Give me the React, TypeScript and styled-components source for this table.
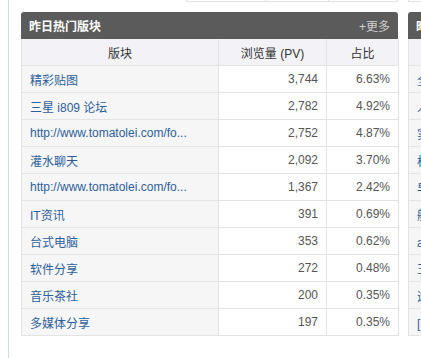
import React from "react";
import styled, { createGlobalStyle } from "styled-components";

const GlobalStyle = createGlobalStyle`
  html, body { margin: 0; padding: 0; background: #fff; overflow: hidden; }
  body { font-family: "Liberation Sans", "Noto Sans CJK SC", sans-serif; font-size: 12px; }
`;

const Page = styled.div`
  width: 421px;
  height: 358px;
  padding-left: 8px;
  box-sizing: border-box;
  overflow: hidden;
`;

const Rail = styled.div`
  height: 100%;
  border-left: 1px solid #cfe0e3;
  padding-left: 12px;
  display: flex;
  gap: 10px;
`;

const Column = styled.div<{ $w: number }>`
  flex: 0 0 ${(p) => p.$w}px;
  width: ${(p) => p.$w}px;
  display: flex;
  flex-direction: column;
`;

const PrevRow = styled.div<{ $offset: number }>`
  display: flex;
  padding-left: ${(p) => p.$offset}px;
  height: 2px;
`;

const PrevCell = styled.div<{ $w: number }>`
  width: ${(p) => p.$w}px;
  height: 1px;
  border-left: 1px solid #e3e3e3;
  border-bottom: 1px solid #e3e3e3;
  box-sizing: content-box;
  &:last-child { border-right: 1px solid #e3e3e3; }
`;

const Panel = styled.section`
  margin-top: 10px;
`;

const PanelHead = styled.div`
  height: 27px;
  background: #5b5b5b;
  border-radius: 3px 3px 0 0;
  display: flex;
  align-items: center;
  justify-content: space-between;
  padding: 0 8px 0 8px;
  box-sizing: border-box;
`;

const Title = styled.h3`
  margin: 0;
  color: #fff;
  font-size: 12px;
  font-weight: bold;
  white-space: nowrap;
`;

const More = styled.a`
  color: #cfcfcf;
  font-size: 12px;
  text-decoration: none;
  white-space: nowrap;
`;

const Table = styled.table`
  border-collapse: collapse;
  table-layout: fixed;
  width: 100%;
`;

const Th = styled.th`
  height: 26px;
  padding: 0;
  background: #f2f2f7;
  border: 1px solid #e3e3e3;
  border-top: none;
  color: #333;
  font-weight: normal;
  font-size: 12px;
  text-align: center;
  white-space: nowrap;
  overflow: hidden;
`;

const Td = styled.td<{ $first?: boolean }>`
  height: 26px;
  padding: 0 8px;
  border: 1px solid #e3e3e3;
  background: ${(p) => (p.$first ? "#f6f6f6" : "#fff")};
  color: #555;
  font-size: 12px;
  text-align: ${(p) => (p.$first ? "left" : "right")};
  white-space: nowrap;
  overflow: hidden;
`;

const Link = styled.a`
  color: #2c5f9b;
  text-decoration: none;
`;

const rows = [
  ["精彩贴图", "3,744", "6.63%"],
  ["三星 i809 论坛", "2,782", "4.92%"],
  ["http://www.tomatolei.com/fo...", "2,752", "4.87%"],
  ["灌水聊天", "2,092", "3.70%"],
  ["http://www.tomatolei.com/fo...", "1,367", "2.42%"],
  ["IT资讯", "391", "0.69%"],
  ["台式电脑", "353", "0.62%"],
  ["软件分享", "272", "0.48%"],
  ["音乐茶社", "200", "0.35%"],
  ["多媒体分享", "197", "0.35%"],
];

const rightRows = [
  "全新手机评测", "人气帖子推荐", "实用技巧分享", "标准配置清单", "早期版本下载",
  "航拍作品欣赏", "a站视频合集", "王者荣耀攻略", "造型设计交流", "[原创] 摄影",
];

export default function App() {
  return (
    <Page>
      <GlobalStyle />
      <Rail>
        <Column $w={377}>
          <PrevRow $offset={165}>
            <PrevCell $w={78} />
            <PrevCell $w={62} />
            <PrevCell $w={68} />
          </PrevRow>
          <Panel>
            <PanelHead>
              <Title>昨日热门版块</Title>
              <More href="#">+更多</More>
            </PanelHead>
            <Table>
              <colgroup>
                <col style={{ width: 197 }} />
                <col style={{ width: 108 }} />
                <col style={{ width: 72 }} />
              </colgroup>
              <thead>
                <tr>
                  <Th>版块</Th>
                  <Th>浏览量 (PV)</Th>
                  <Th>占比</Th>
                </tr>
              </thead>
              <tbody>
                {rows.map((r, i) => (
                  <tr key={i}>
                    <Td $first>
                      <Link href="#">{r[0]}</Link>
                    </Td>
                    <Td>{r[1]}</Td>
                    <Td>{r[2]}</Td>
                  </tr>
                ))}
              </tbody>
            </Table>
          </Panel>
        </Column>
        <Column $w={377}>
          <PrevRow $offset={0}>
            <PrevCell $w={200} />
          </PrevRow>
          <Panel>
            <PanelHead>
              <Title>昨日热门主题</Title>
              <More href="#">+更多</More>
            </PanelHead>
            <Table>
              <colgroup>
                <col style={{ width: 197 }} />
                <col style={{ width: 108 }} />
                <col style={{ width: 72 }} />
              </colgroup>
              <thead>
                <tr>
                  <Th>主题</Th>
                  <Th>浏览量 (PV)</Th>
                  <Th>占比</Th>
                </tr>
              </thead>
              <tbody>
                {rightRows.map((t, i) => (
                  <tr key={i}>
                    <Td $first>
                      <Link href="#">{t}</Link>
                    </Td>
                    <Td>{rows[i][1]}</Td>
                    <Td>{rows[i][2]}</Td>
                  </tr>
                ))}
              </tbody>
            </Table>
          </Panel>
        </Column>
      </Rail>
    </Page>
  );
}
